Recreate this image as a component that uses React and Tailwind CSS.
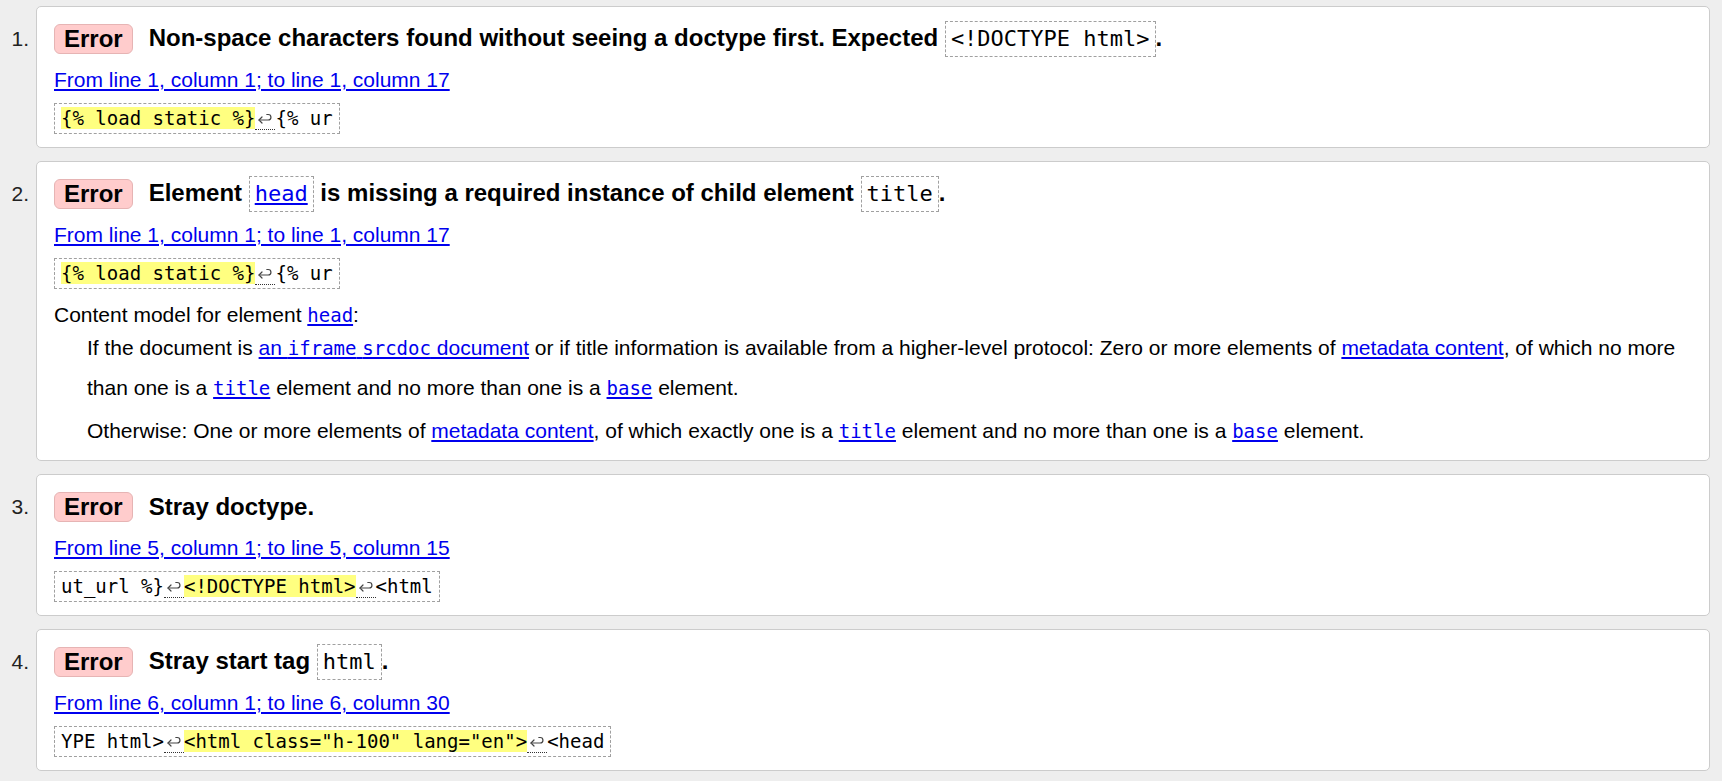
const mono = "font-[DejaVu_Sans_Mono,monospace] font-normal";
const link = "text-[#0000ee] underline";

// line break marker inside the source extract
function Lf() {
  return (
    <span className="border-b border-dotted border-[#333] px-[2px]">
      <svg
        className="inline-block align-[-1px]"
        width="16"
        height="14"
        viewBox="0 0 16 14"
        fill="none"
        stroke="#444"
        strokeWidth="1.2"
        strokeLinecap="round"
        strokeLinejoin="round"
      >
        <path d="M2 8H11.2A2.75 2.75 0 0 0 11.2 2.5H9.8" />
        <path d="M5 5L2 8L5 11" />
      </svg>
    </span>
  );
}

function Hl({ children }) {
  return <mark className="bg-[#ffff80] text-black">{children}</mark>;
}

function HeadCode({ children, href }) {
  return (
    <code
      className={`inline-block border border-dashed border-[#a0a0a0] px-[5px] text-[22px] leading-[34px] ${mono}`}
    >
      {href ? <a className={link}>{children}</a> : children}
    </code>
  );
}

function Extract({ children }) {
  return (
    <div className="mt-[11px] flex">
      <code
        className={`inline-block whitespace-pre border border-dashed border-[#a0a0a0] px-[6px] py-[3px] text-[19px] leading-[23px] ${mono}`}
      >
        {children}
      </code>
    </div>
  );
}

function ErrorItem({ n, message, location, extract, children, last = "pb-[13px]" }) {
  return (
    <li className="flex">
      <div className="w-[36px] shrink-0 pt-[15px] pr-[7px] text-right leading-[36px] text-[#222]">
        {n}.
      </div>
      <div className={`flex-1 rounded-[5px] border border-[#cccccc] bg-white px-[17px] pt-[14px] ${last}`}>
        <div className="flex h-[36px] items-center">
          <span className="rounded-[6px] border border-[#e6b4b4] bg-[#ffcccc] px-[9px] text-[24px] font-bold leading-[28px]">
            Error
          </span>
          <p className="ml-[16px] text-[24px] font-bold leading-[24px]">{message}</p>
        </div>
        <p className="mt-[11px] leading-[24px]">
          <a className={link}>{location}</a>
        </p>
        <Extract>{extract}</Extract>
        {children}
      </div>
    </li>
  );
}

export default function App() {
  return (
    <div className="min-h-screen bg-[#eeeeee] pt-[6px] pr-[12px] pb-[10px] font-[Liberation_Sans,Arial,sans-serif] text-[21px] text-black">
      <ol className="flex flex-col gap-[13px]">
        <ErrorItem
          n={1}
          message={
            <>
              Non-space characters found without seeing a doctype first. Expected{" "}
              <HeadCode>&lt;!DOCTYPE html&gt;</HeadCode>.
            </>
          }
          location="From line 1, column 1; to line 1, column 17"
          extract={
            <>
              <Hl>{"{% load static %}"}</Hl>
              <Lf />
              {"{% ur"}
            </>
          }
        />
        <ErrorItem
          n={2}
          last="pb-[9px]"
          message={
            <>
              Element <HeadCode href>head</HeadCode> is missing a required instance of child element{" "}
              <HeadCode>title</HeadCode>.
            </>
          }
          location="From line 1, column 1; to line 1, column 17"
          extract={
            <>
              <Hl>{"{% load static %}"}</Hl>
              <Lf />
              {"{% ur"}
            </>
          }
        >
          <p className="mt-[14px] leading-[24px]">
            Content model for element{" "}
            <a className={link}>
              <code className={`text-[19px] ${mono}`}>head</code>
            </a>
            :
          </p>
          <div className="mt-[1px] pl-[33px] leading-[39px]">
            <p>
              If the document is{" "}
              <a className={link}>
                an <code className={`text-[19px] ${mono}`}>iframe</code>{" "}
                <code className={`text-[19px] ${mono}`}>srcdoc</code> document
              </a>{" "}
              or if title information is available from a higher-level protocol: Zero or more elements of{" "}
              <a className={link}>metadata content</a>, of which no more
              <br />
              than one is a{" "}
              <a className={link}>
                <code className={`text-[19px] ${mono}`}>title</code>
              </a>{" "}
              element and no more than one is a{" "}
              <a className={link}>
                <code className={`text-[19px] ${mono}`}>base</code>
              </a>{" "}
              element.
            </p>
            <p className="mt-[3px]">
              Otherwise: One or more elements of <a className={link}>metadata content</a>, of which exactly one is a{" "}
              <a className={link}>
                <code className={`text-[19px] ${mono}`}>title</code>
              </a>{" "}
              element and no more than one is a{" "}
              <a className={link}>
                <code className={`text-[19px] ${mono}`}>base</code>
              </a>{" "}
              element.
            </p>
          </div>
        </ErrorItem>
        <ErrorItem
          n={3}
          message="Stray doctype."
          location="From line 5, column 1; to line 5, column 15"
          extract={
            <>
              {"ut_url %}"}
              <Lf />
              <Hl>{"<!DOCTYPE html>"}</Hl>
              <Lf />
              {"<html"}
            </>
          }
        />
        <ErrorItem
          n={4}
          message={
            <>
              Stray start tag <HeadCode>html</HeadCode>.
            </>
          }
          location="From line 6, column 1; to line 6, column 30"
          extract={
            <>
              {"YPE html>"}
              <Lf />
              <Hl>{'<html class="h-100" lang="en">'}</Hl>
              <Lf />
              {"<head"}
            </>
          }
        />
      </ol>
    </div>
  );
}
